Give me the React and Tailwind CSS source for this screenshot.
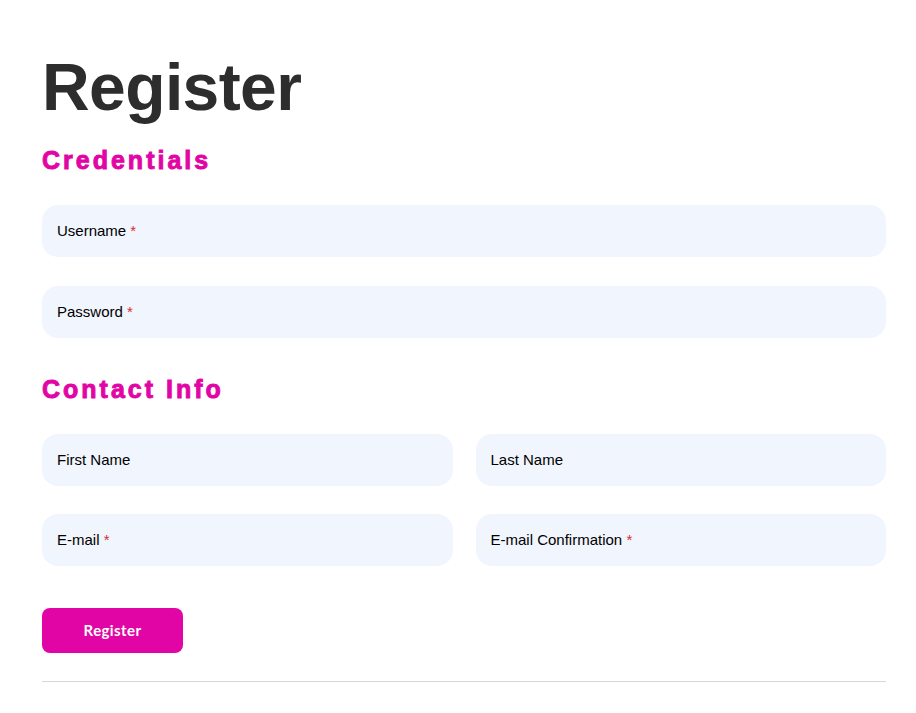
import React from 'react';

const Field = ({ label, required }) => (
    <div className="h-[52px] rounded-[16px] bg-[#f1f5fd] flex items-center px-[15px]">
        <label className="text-[15px] text-black">
            {label}
            {required && <span className="text-[#d32f2f]"> *</span>}
        </label>
    </div>
);

const App = () => {
    return (
        <div className="min-h-screen bg-white pl-[42px] pr-[30px] pt-[54px] pb-8 font-['Liberation_Sans',Arial,sans-serif]">
            <h1 className="text-[66px] leading-none font-bold tracking-[-0.6px] text-[#2d2d2d]">
                Register
            </h1>

            {/* Credentials */}
            <h2 className="mt-[28px] text-[25px] leading-none font-bold tracking-[3px] text-[#e205a5] [-webkit-text-stroke:0.9px_#e205a5]">
                Credentials
            </h2>
            <div className="mt-[32px] flex flex-col gap-[29px]">
                <Field label="Username" required />
                <Field label="Password" required />
            </div>

            {/* Contact Info */}
            <h2 className="mt-[39px] text-[25px] leading-none font-bold tracking-[3px] text-[#e205a5] [-webkit-text-stroke:0.9px_#e205a5]">
                Contact Info
            </h2>
            <div className="mt-[32px] grid grid-cols-2 gap-x-[23px] gap-y-[28px]">
                <Field label="First Name" />
                <Field label="Last Name" />
                <Field label="E-mail" required />
                <Field label="E-mail Confirmation" required />
            </div>

            <button className="mt-[42px] w-[141px] h-[45px] rounded-[8px] bg-[#e205a5] text-white text-[15px] font-bold font-['Lato','Noto_Sans',sans-serif] tracking-[0.4px]">
                Register
            </button>

            <hr className="mt-[28px] border-0 border-t border-[#d6d6de]" />
        </div>
    );
};

export default App;
